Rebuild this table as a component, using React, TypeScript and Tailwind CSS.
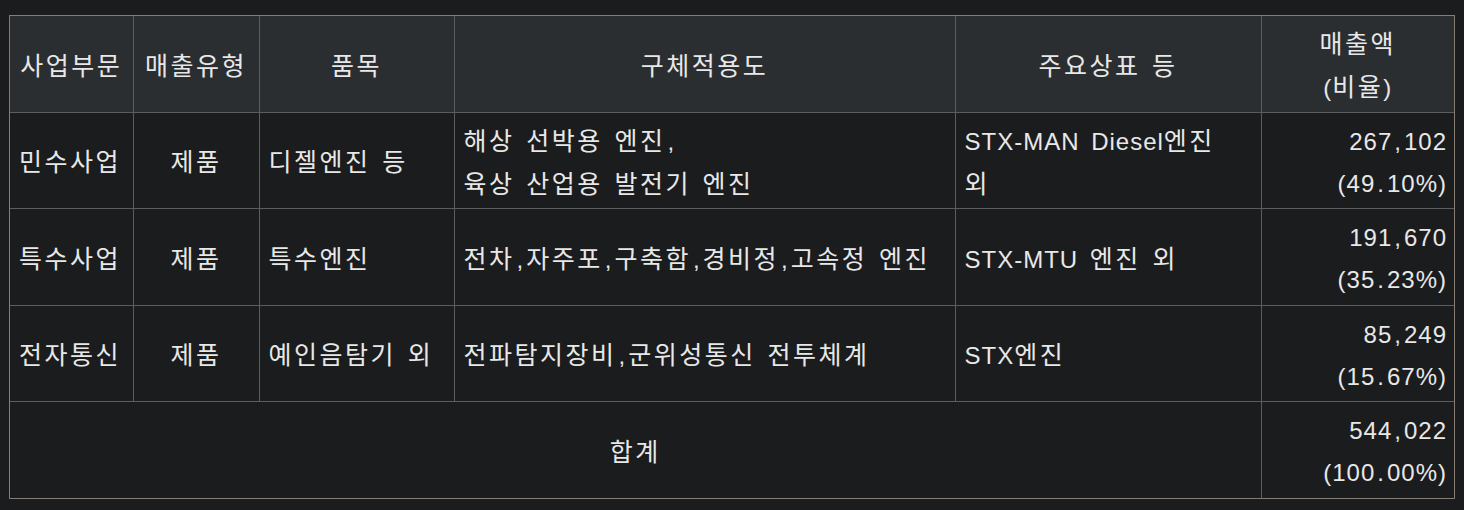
import React from "react";

const ff = { fontFamily: '"Liberation Sans", "Noto Sans CJK KR", sans-serif' };

function T({ s }: { s: string }) {
  const parts = s.match(/([가-힣]+|[,.]+|[^가-힣,.]+)/g) || [];
  return (
    <>
      {parts.map((p, i) => {
        if (/^[가-힣]+$/.test(p))
          return (
            <span key={i} className="text-[25px] tracking-[2.5px]">
              {p}
            </span>
          );
        if (/^[,.]+$/.test(p))
          return (
            <span key={i} className="px-[2px]">
              {p}
            </span>
          );
        return <span key={i}>{p}</span>;
      })}
    </>
  );
}

const rows = [
  { a: "민수사업", b: "제품", c: "디젤엔진 등", d: ["해상 선박용 엔진,", "육상 산업용 발전기 엔진"], e: ["STX-MAN Diesel엔진", "외"], f: ["267,102", "(49.10%)"], h: "h-[96px]" },
  { a: "특수사업", b: "제품", c: "특수엔진", d: ["전차,자주포,구축함,경비정,고속정 엔진"], e: ["STX-MTU 엔진 외"], f: ["191,670", "(35.23%)"], h: "h-[97px]" },
  { a: "전자통신", b: "제품", c: "예인음탐기 외", d: ["전파탐지장비,군위성통신 전투체계"], e: ["STX엔진"], f: ["85,249", "(15.67%)"], h: "h-[96px]" },
];

export default function App() {
  const cell = "border-[#5d5d5d] align-middle pt-[5px]";
  return (
    <div className="min-h-[510px] w-[1464px] bg-[#1b1c1e] pl-[9px] pt-[15px]" style={ff}>
      <div className="w-[1446px] border border-[#857c72]">
        <table className="w-[1444px] table-fixed border-collapse text-[24px] leading-[42px] tracking-[1px] [word-spacing:4px] text-[#e8e8e8]">
          <colgroup>
            <col className="w-[123px]" />
            <col className="w-[126px]" />
            <col className="w-[195px]" />
            <col className="w-[501px]" />
            <col className="w-[306px]" />
            <col className="w-[193px]" />
          </colgroup>
          <thead>
            <tr className="h-[96px] bg-[#2b2e31]">
              <th className={`${cell} border-r border-b font-normal text-center`}><T s="사업부문" /></th>
              <th className={`${cell} border-r border-b font-normal text-center`}><T s="매출유형" /></th>
              <th className={`${cell} border-r border-b font-normal text-center`}><T s="품목" /></th>
              <th className={`${cell} border-r border-b font-normal text-center`}><T s="구체적용도" /></th>
              <th className={`${cell} border-r border-b font-normal text-center`}><T s="주요상표 등" /></th>
              <th className={`${cell} border-b font-normal text-center`}>
                <div><T s="매출액" /></div>
                <div><T s="(비율)" /></div>
              </th>
            </tr>
          </thead>
          <tbody>
            {rows.map((r, i) => (
              <tr key={i} className={r.h}>
                <td className={`${cell} border-r border-b pl-[9px] text-left`}><T s={r.a} /></td>
                <td className={`${cell} border-r border-b text-center`}><T s={r.b} /></td>
                <td className={`${cell} border-r border-b pl-[9px] text-left`}><T s={r.c} /></td>
                <td className={`${cell} border-r border-b pl-[9px] text-left`}>
                  {r.d.map((t, j) => (
                    <div key={j}><T s={t} /></div>
                  ))}
                </td>
                <td className={`${cell} border-r border-b pl-[9px] text-left`}>
                  {r.e.map((t, j) => (
                    <div key={j}><T s={t} /></div>
                  ))}
                </td>
                <td className={`${cell} border-b pr-[7px] text-right`}>
                  {r.f.map((t, j) => (
                    <div key={j}><T s={t} /></div>
                  ))}
                </td>
              </tr>
            ))}
            <tr className="h-[97px]">
              <td colSpan={5} className={`${cell} border-r text-center`}><T s="합계" /></td>
              <td className={`${cell} pr-[7px] text-right`}>
                <div><T s="544,022" /></div>
                <div><T s="(100.00%)" /></div>
              </td>
            </tr>
          </tbody>
        </table>
      </div>
    </div>
  );
}
